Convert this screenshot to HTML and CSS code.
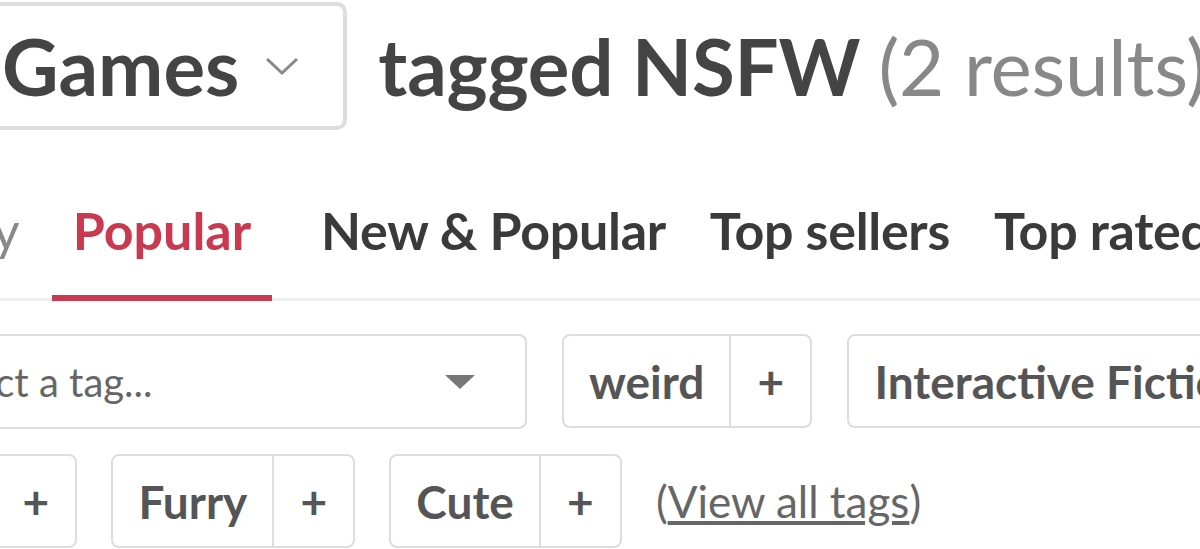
FILE: index.html
```html
<!DOCTYPE html>
<html lang="en">
<head>
  <meta charset="UTF-8" />
  <title>Games tagged NSFW</title>
  <link rel="stylesheet" href="styles.css">
</head>
<body>

<div class="title-row">
  <div class="type-picker">
    <span>Games</span>
    <svg class="chevron" width="34" height="20" viewBox="0 0 34 20"><path d="M2 3 L17 17 L32 3" fill="none" stroke="#888" stroke-width="3"/></svg>
  </div>
  <h1>tagged NSFW <span class="count">(2 results)</span></h1>
</div>

<div class="tabs">
  <span class="sort-label">Sort by</span>
  <a class="tab active">Popular</a>
  <a class="tab">New &amp; Popular</a>
  <a class="tab">Top sellers</a>
  <a class="tab">Top rated</a>
  <a class="tab">Most Recent</a>
</div>

<div class="tag-row first">
  <div class="tag-select">
    <span>Select a tag...</span>
    <span class="triangle"></span>
  </div>
  <div class="tag"><span class="name">weird</span><span class="add">+</span></div>
  <div class="tag"><span class="name">Interactive Fiction</span><span class="add">+</span></div>
</div>

<div class="tag-row second">
  <div class="tag"><span class="name">Horror</span><span class="add">+</span></div>
  <div class="tag"><span class="name">Furry</span><span class="add">+</span></div>
  <div class="tag"><span class="name">Cute</span><span class="add">+</span></div>
  <a class="view-all">(<u>View all tags</u>)</a>
</div>

</body>
</html>
```

FILE: styles.css
```css
body {
  margin: 0;
  font-family: Lato, 'Noto Sans', sans-serif;
  background: #fff;
  color: #444;
  overflow: hidden;
  width: 1200px;
  height: 549px;
}

.title-row {
  display: flex;
  align-items: center;
  white-space: nowrap;
  margin-left: -45px;
  margin-top: 2px;
}

.type-picker {
  display: flex;
  align-items: center;
  flex-shrink: 0;
  box-sizing: border-box;
  height: 128px;
  padding: 0 44px 0 43px;
  border: 4px solid #ddd;
  border-radius: 10px;
  font-size: 78px;
  font-weight: 700;
  line-height: 1;
}

.chevron {
  margin-left: 26px;
}

h1 {
  margin: 0 0 0 31px;
  font-size: 78px;
  font-weight: 700;
  line-height: 1;
  letter-spacing: -0.2px;
}

.count {
  font-weight: 400;
  color: #888;
}

.tabs {
  display: flex;
  white-space: nowrap;
  margin-top: 69px;
  margin-left: -144px;
  border-bottom: 3px solid #eee;
  font-size: 52px;
  line-height: 1.2;
}

.sort-label {
  flex-shrink: 0;
  color: #888;
  margin-right: 32px;
}

.tab {
  flex-shrink: 0;
  padding: 0 0 34px;
  margin-right: 44px;
  margin-bottom: -3px;
  font-weight: 700;
  color: #3a3a3a;
  border-bottom: 6px solid transparent;
  letter-spacing: -0.3px;
}

.tab.active {
  padding: 0 21px 34px;
  margin-right: 49px;
  color: #c9394f;
  border-bottom-color: #c9394f;
  letter-spacing: 0;
}

.tag-row {
  display: flex;
  gap: 35px;
  white-space: nowrap;
  font-size: 46px;
}

.tag-row > * {
  flex-shrink: 0;
}

.tag-row.first {
  margin-top: 33px;
  margin-left: -120px;
}

.tag-row.second {
  margin-top: 25px;
  margin-left: -196px;
  gap: 34px;
}

.tag-select {
  display: flex;
  align-items: center;
  box-sizing: border-box;
  width: 647px;
  height: 95px;
  padding: 0 50px 0 40px;
  border: 2px solid #ddd;
  border-radius: 8px;
  font-size: 40px;
  color: #666;
}

.triangle {
  margin-left: auto;
  width: 0;
  height: 0;
  border-left: 15px solid transparent;
  border-right: 15px solid transparent;
  border-top: 14px solid #777;
}

.tag {
  display: flex;
  box-sizing: border-box;
  height: 94px;
  border: 2px solid #ddd;
  border-radius: 8px;
  color: #555;
  font-weight: 700;
}

.tag .name {
  display: flex;
  align-items: center;
  padding: 0 25px;
}

.tag .add {
  display: flex;
  align-items: center;
  justify-content: center;
  width: 79px;
  border-left: 2px solid #ddd;
}

.view-all {
  display: flex;
  align-items: center;
  font-size: 44px;
  color: #666;
}
```
